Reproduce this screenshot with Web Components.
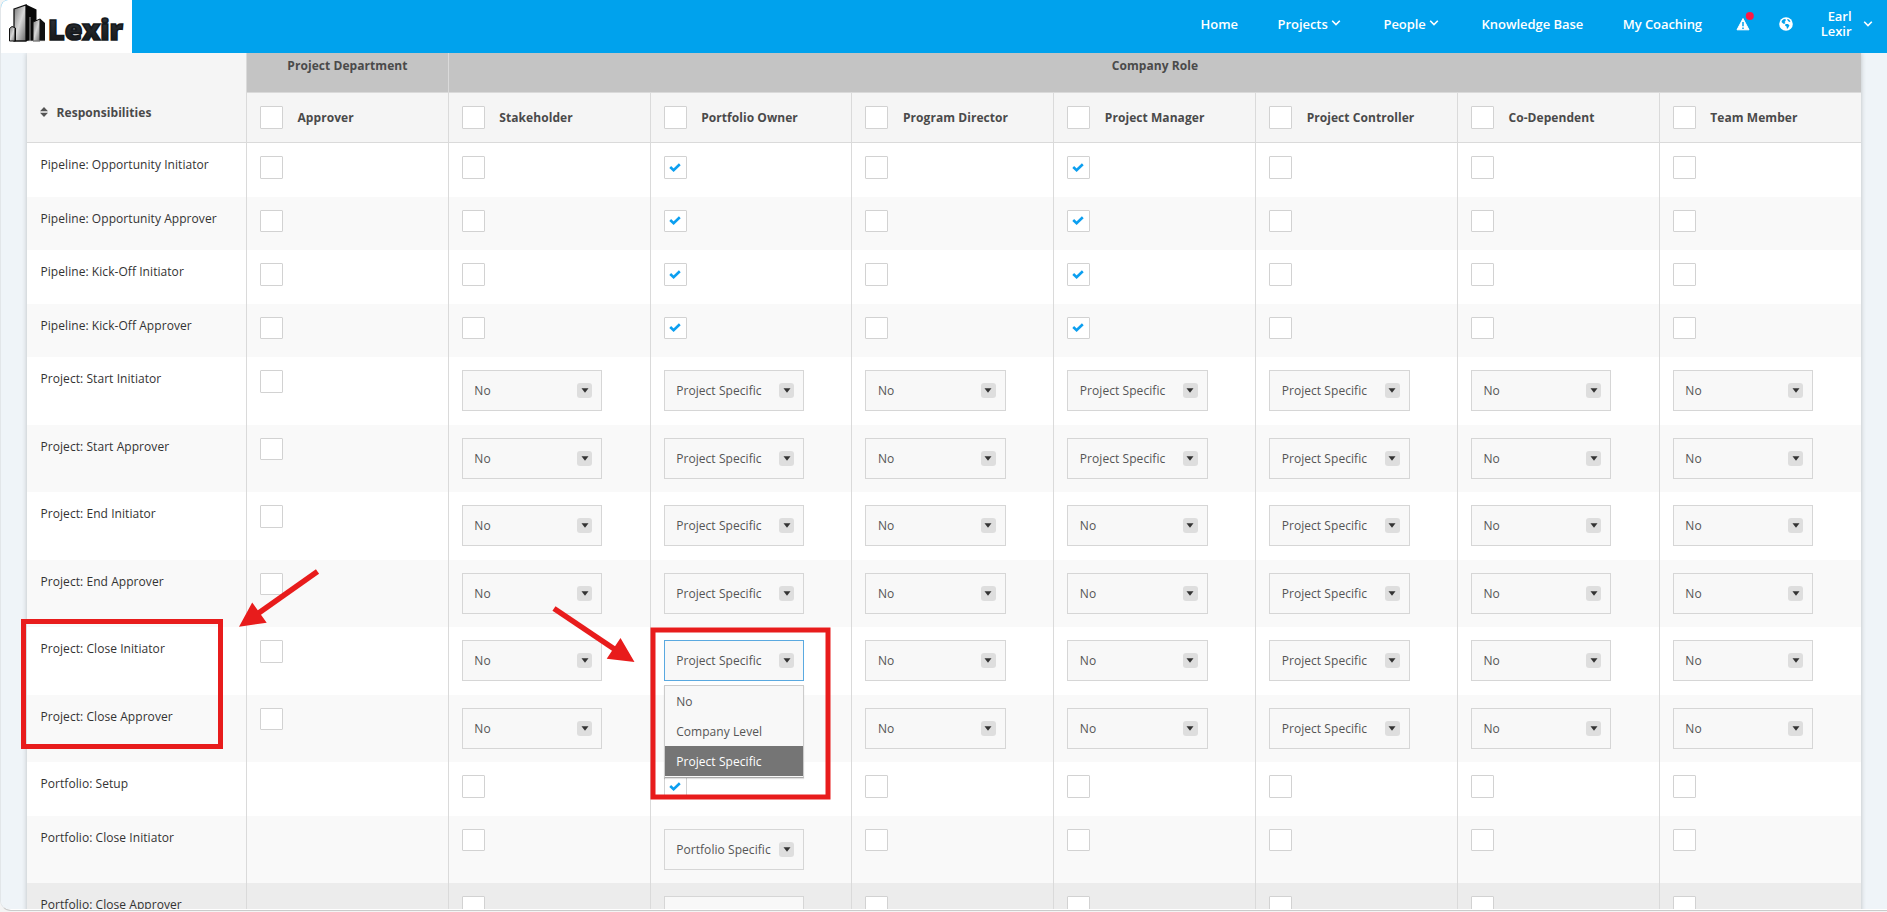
<!DOCTYPE html>
<html lang="en">
<head>
<meta charset="utf-8">
<title>Lexir - Responsibilities</title>
<style>
    html, body { margin: 0; height: 100%; overflow: hidden; background: #f4f4f4; }
    body { font-family: "Open Sans", "Noto Sans", sans-serif; font-size: 12px; color: #333; }
</style>
</head>
<body>
<app-shell>
    <app-header slot="header">
        <nav-item>Home</nav-item>
        <nav-item menu>Projects</nav-item>
        <nav-item menu>People</nav-item>
        <nav-item>Knowledge Base</nav-item>
        <nav-item>My Coaching</nav-item>
    </app-header>
    <role-matrix></role-matrix>
    <callout-layer slot="overlay"></callout-layer>
</app-shell>

<script>
const CHEVRON = `<svg class="chevron" width="10" height="6" viewBox="0 0 10 6"><path d="M1.2 .8 5 4.6 8.8 .8" fill="none" stroke="#fff" stroke-width="1.6"/></svg>`

class BaseElement extends HTMLElement {
    constructor() {
        super()
        this.attachShadow({mode: 'open'})
    }

    connectedCallback() {
        const template = document.createElement('template')
        template.innerHTML = `<style>* { box-sizing: border-box; } ${this.css()}</style>${this.html()}`
        this.shadowRoot.replaceChildren(template.content.cloneNode(true))
    }
}

class AppShell extends BaseElement {
    css() {
        return `
            :host { display: block; position: relative; height: 911px; overflow: hidden; box-sizing: border-box;
                border-left: 1px solid #e2e6e9; border-bottom: 1px solid #cbcbcb; border-radius: 8px 0 0 11px; background: #fff; }
            .page { display: flex; flex-direction: column; height: 909px; margin-left: -1px; overflow: hidden; background: #eff4f8; }
            main { flex: 1; min-height: 0; padding: 0 26px 0 27px; }
        `
    }

    html() {
        return `
            <div class="page">
                <slot name="header"></slot>
                <main><slot></slot></main>
            </div>
            <slot name="overlay"></slot>
        `
    }
}

class AppHeader extends BaseElement {
    css() {
        return `
            :host { display: flex; flex: none; height: 53px; position: relative; z-index: 2; background: #00a2ed; color: #fff;
                font-size: 13px; font-weight: 600; letter-spacing: -.05px; }
            .logo { width: 132px; height: 53px; background: #fff; letter-spacing: 0; }
            nav { flex: 1; display: flex; align-items: center; justify-content: flex-end; padding: 0 14.5px 5px 0; }
            .alert { margin-left: 33.5px; overflow: visible; }
            .globe { margin-left: 29px; }
            .user { display: flex; align-items: center; margin-left: 29px; text-align: right; line-height: 15px; width: 51px; justify-content: flex-end; }
            .user svg { margin-left: 11px; flex: none; }
        `
    }

    html() {
        return `
            <svg class="logo" viewBox="0 0 132 53">
                <defs>
                    <linearGradient id="face" x1="0" y1="0" x2="1" y2="1">
                        <stop offset="0" stop-color="#777"/><stop offset=".5" stop-color="#d8d8d8"/><stop offset="1" stop-color="#666"/>
                    </linearGradient>
                    <linearGradient id="ink" x1="0" y1="0" x2="0" y2="1">
                        <stop offset="0" stop-color="#333a42"/><stop offset="1" stop-color="#111"/>
                    </linearGradient>
                </defs>
                <path d="M14 9 26 5 26 41 14 41Z" fill="url(#face)" stroke="#111" stroke-width="1.3"/>
                <path d="M26 4.5 36.5 9.5V41H26Z" fill="#080808"/>
                <path d="M9.500 28.500 12 26.500 15.500 28V41H9.500Z" fill="url(#face)" stroke="#111"/>
                <path d="M14.500 28 16 29V41H14.500Z" fill="#080808"/>
                <path d="M33 22 40 19V41H33Z" fill="url(#face)" stroke="#111"/>
                <path d="M40 18.500 45 23V41H40Z" fill="#111"/>
                <path d="M30 17V41M27.500 41H45" stroke="#ddd" stroke-width=".7"/>
                <text x="48" y="40" textLength="75" lengthAdjust="spacingAndGlyphs" font-family="Open Sans" font-size="28.500" font-weight="800" fill="url(#ink)" stroke="#15191d" stroke-width="1.700">Lexir</text>
            </svg>
            <nav>
                <slot></slot>
                <svg class="alert" width="14" height="14" viewBox="0 0 14 14">
                    <path d="M7 1.500 13 12.800H1Z" fill="#fff" stroke="#fff" stroke-width="1" stroke-linejoin="round"/>
                    <path d="M7 5V9.300M7 10.500V12" stroke="#00a2ed" stroke-width="1.500"/>
                    <circle cx="13.800" cy="-1" r="4" fill="#ff1744"/>
                </svg>
                <svg class="globe" width="14" height="14" viewBox="0 0 14 14">
                    <circle cx="7" cy="7" r="6.800" fill="#fff"/>
                    <path d="M3 3.500 5 2 7 2.500 6.500 4 5.500 5 6.500 6 5 7 3.500 6 2.500 5ZM8 2 10 2.500 11.500 4.500 10.500 5 9 4ZM6.500 7 9 7 10.500 8.500 9 11 8 12 7.500 9.500 6 8.500Z" fill="#00a2ed"/>
                </svg>
                <div class="user"><span>Earl<br>Lexir</span>${CHEVRON}</div>
            </nav>
        `
    }
}

class NavItem extends BaseElement {
    css() {
        return `
            :host { display: flex; align-items: center; margin-left: 39.5px; white-space: nowrap; }
            :host([menu]) { margin-right: 2.8px; }
            .chevron { margin: 0 0 2px 3.5px; }
        `
    }

    html() {
        return `<slot></slot>${this.hasAttribute('menu') ? CHEVRON : ''}`
    }
}

class CheckBox extends BaseElement {
    css() {
        return `
            :host { display: flex; flex: none; align-items: center; justify-content: center; width: 23px; height: 22.5px;
                box-sizing: border-box; background: #fff; border: 1px solid #d2d2d2; border-radius: 1px; }
            svg { margin-right: 1px; }
        `
    }

    html() {
        return this.hasAttribute('checked')
            ? `<svg width="12" height="9" viewBox="0 0 12 9"><path d="M1.200 4 4.600 7.200 10.800 1.200" fill="none" stroke="#0c9ff0" stroke-width="2.600"/></svg>`
            : ''
    }
}

class LevelSelect extends BaseElement {
    css() {
        return `
            :host { display: block; position: relative; width: 140.4px; color: #555; }
            .box { display: flex; align-items: center; justify-content: space-between; height: 41px; padding: 0 9px 0 11.5px;
                background: #f8f8f8; border: 1px solid #d6d6d6; white-space: nowrap; }
            :host([open]) .box { border-color: #5aa9e0; }
            .caret { display: flex; align-items: center; justify-content: center; width: 15px; height: 15px; border-radius: 3px; background: #dedede; }
            .menu { position: absolute; z-index: 1; left: 0; top: 45px; width: 100%; padding-bottom: 1px; background: #f8f8f8; border: 1px solid #ccc;
                border-bottom-color: #aaa; box-shadow: 0 1px 1px rgba(0, 0, 0, .12); }
            .option { height: 30px; padding: 1px 0 0 11.5px; line-height: 30px; }
            .option.selected { background: #757575; color: #fff; }
        `
    }

    html() {
        const value = this.getAttribute('value')
        const options = ['No', 'Company Level', 'Project Specific']
        const menu = options.map(o => `<div class="option ${o === value ? 'selected' : ''}">${o}</div>`).join('')
        return `
            <div class="box">
                <span>${value}</span>
                <span class="caret"><svg width="8" height="5" viewBox="0 0 8 5"><path d="M.5 .3H7.500L4 4.800Z" fill="#333"/></svg></span>
            </div>
            ${this.hasAttribute('open') ? `<div class="menu">${menu}</div>` : ''}
        `
    }
}

class RoleMatrix extends BaseElement {
    // x = checked, o = unchecked, - = no control, N / P / F = select, * = open select
    get rows() {
        return [
            ['Pipeline: Opportunity Initiator', 'ooxoxooo'],
            ['Pipeline: Opportunity Approver', 'ooxoxooo'],
            ['Pipeline: Kick-Off Initiator', 'ooxoxooo'],
            ['Pipeline: Kick-Off Approver', 'ooxoxooo'],
            ['Project: Start Initiator', 'oNPNPPNN'],
            ['Project: Start Approver', 'oNPNPPNN'],
            ['Project: End Initiator', 'oNPNNPNN'],
            ['Project: End Approver', 'oNPNNPNN'],
            ['Project: Close Initiator', 'oN*NNPNN'],
            ['Project: Close Approver', 'oNPNNPNN'],
            ['Portfolio: Setup', '-oxooooo'],
            ['Portfolio: Close Initiator', '-oFooooo'],
            ['Portfolio: Close Approver', '-oFooooo']
        ]
    }

    css() {
        return `
            :host { display: block; background: #fff; box-shadow: 0 0 5px rgba(0, 0, 0, .22); letter-spacing: .06px; }
            .grid { display: grid; grid-template-columns: 220px repeat(7, 201.84px) 1fr; }
            .head { background: #f5f5f5; color: #4a4a4a; font-weight: 700; }
            .head > div { border-right: 1px solid #dadada; border-bottom: 1px solid #dadada; }
            .head > div:last-child { border-right: 0; }
            .title { grid-row: span 2; display: flex; align-items: center; gap: 9px; padding: 29px 0 0 12.5px; }
            .group { height: 40px; padding-top: 4px; line-height: 17px; background: #c4c4c4; text-align: center; }
            .group.company { grid-column: span 7; border-right: 0; }
            .role { display: flex; align-items: center; gap: 14.5px; height: 50px; padding-left: 13px; }
            .row > div { padding: 13px 0 0 13px; border-right: 1px solid #dadada; }
            .row > div:last-child { border-right: 0; }
            .row > .label { padding-left: 13.5px; line-height: 18px; }
            .row { height: 53.5px; }
            .row.tall { height: 67.5px; }
            .row:nth-child(even) { background: #f9f9f9; }
            .row:last-child { background: #ececec; }
        `
    }

    cell(code) {
        if (code === '-') return '<div></div>'
        if (code === 'o') return '<div><check-box></check-box></div>'
        if (code === 'x') return '<div><check-box checked></check-box></div>'
        const value = {N: 'No', P: 'Project Specific', '*': 'Project Specific', F: 'Portfolio Specific'}[code]
        return `<div><level-select value="${value}" ${code === '*' ? 'open' : ''}></level-select></div>`
    }

    html() {
        const roles = ['Approver', 'Stakeholder', 'Portfolio Owner', 'Program Director', 'Project Manager', 'Project Controller', 'Co-Dependent', 'Team Member']
        return `
            <div class="grid head">
                <div class="title">
                    <svg width="8" height="10" viewBox="0 0 8 10"><path d="M0 4.200 4 0 8 4.200ZM0 5.800H8L4 10Z" fill="#555"/></svg>
                    Responsibilities
                </div>
                <div class="group">Project Department</div>
                <div class="group company">Company Role</div>
                ${roles.map(r => `<div class="role"><check-box></check-box>${r}</div>`).join('')}
            </div>
            <div class="body">
                ${this.rows.map(([name, codes]) => `
                    <div class="grid row ${/[NPF*]/.test(codes) ? 'tall' : ''}">
                        <div class="label">${name}</div>
                        ${[...codes].map(c => this.cell(c)).join('')}
                    </div>
                `).join('')}
            </div>
        `
    }
}

// Red frames and arrows drawn over the table
class CalloutLayer extends BaseElement {
    css() {
        return `
            :host { position: absolute; top: 0; left: -1px; z-index: 3; pointer-events: none; }
            svg { display: block; }
        `
    }

    html() {
        return `
            <svg width="1887" height="911" viewBox="0 0 1887 911" fill="none" stroke="#e81c1c" stroke-width="5">
                <rect x="23.500" y="621.500" width="197" height="125"/>
                <rect x="653" y="630" width="175" height="167"/>
                <path d="M317.500 571.500 258 613.500" stroke-width="5.500"/>
                <path d="M554 608.500 615 649.500" stroke-width="5.500"/>
                <path d="M239 626.800 252.200 602.400 266.700 622.700ZM634.500 662 620.500 638 606.700 658.800Z" fill="#e81c1c" stroke="none"/>
            </svg>
        `
    }
}

window.customElements.define('app-shell', AppShell)
window.customElements.define('app-header', AppHeader)
window.customElements.define('nav-item', NavItem)
window.customElements.define('check-box', CheckBox)
window.customElements.define('level-select', LevelSelect)
window.customElements.define('role-matrix', RoleMatrix)
window.customElements.define('callout-layer', CalloutLayer)
</script>
</body>
</html>
